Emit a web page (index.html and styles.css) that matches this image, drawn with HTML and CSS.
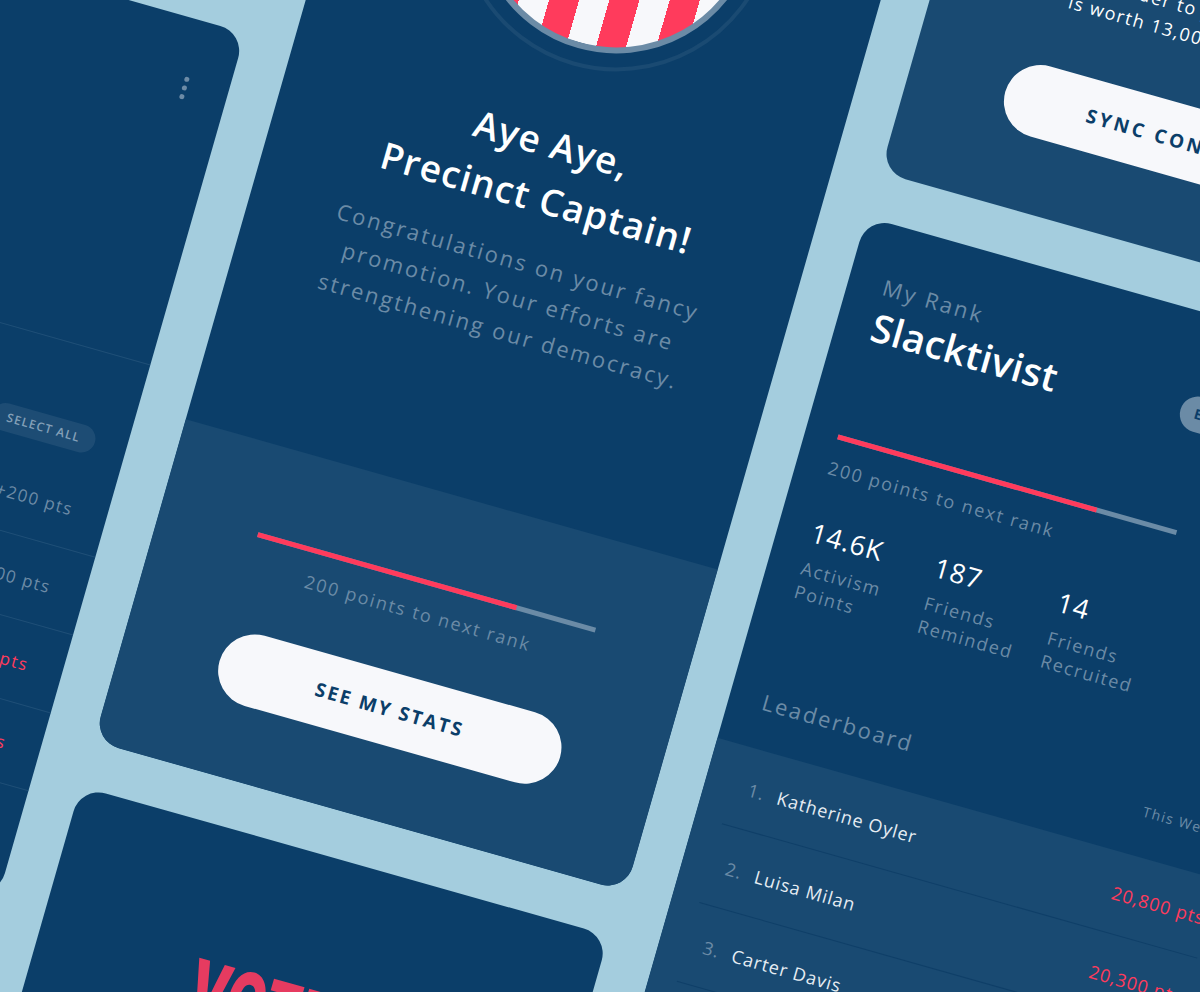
FILE: index.html
```html
<!DOCTYPE html>
<html lang="en">
<head>
    <meta charset="UTF-8">
    <meta name="viewport" content="width=device-width, initial-scale=1.0">
    <title>Precinct Captain</title>
    <link rel="stylesheet" href="styles.css">
</head>
<body>
    <div class="canvas">
        <!-- left screen, only its right side shows -->
        <section class="screen screen-left">
            <div class="menu-dots"><span></span><span></span><span></span></div>
            <div class="left-rule"></div>
            <div class="select-row"><span class="select-all">SELECT ALL</span></div>
            <div class="task-row"><span>+200 pts</span></div>
            <div class="task-row"><span>+200 pts</span></div>
            <div class="task-row is-red"><span>+200 pts</span></div>
            <div class="task-row is-red"><span>+200 pts</span></div>
        </section>

        <!-- promotion screen -->
        <section class="screen screen-promo">
            <div class="badge-ring"><div class="badge"></div></div>
            <div class="promo-top">
                <h1>Aye Aye,<br>Precinct Captain!</h1>
                <p>Congratulations on your fancy promotion. Your efforts are strengthening our democracy.</p>
            </div>
            <div class="promo-bottom">
                <div class="progress"><div class="progress-fill"></div></div>
                <div class="progress-label">200 points to next rank</div>
                <button class="pill-button">SEE MY STATS</button>
            </div>
        </section>

        <!-- vote screen under the promotion -->
        <section class="screen screen-vote">
            <div class="vote-logo">VOTE</div>
        </section>

        <!-- sync card, top right -->
        <section class="screen screen-sync">
            <p>A reminder to your contact list<br>is worth 13,000 activism pts.</p>
            <button class="pill-button">SYNC CONTACTS</button>
        </section>

        <!-- rank screen -->
        <section class="screen screen-rank">
            <div class="rank-top">
                <div class="rank-head">
                    <div class="rank-title">
                        <div class="rank-label">My Rank</div>
                        <div class="rank-name">Slacktivist</div>
                    </div>
                    <span class="edit-pill">Edit</span>
                </div>
                <div class="progress"><div class="progress-fill"></div></div>
                <div class="progress-label">200 points to next rank</div>
                <div class="stats">
                    <div class="stat"><strong>14.6K</strong><span>Activism<br>Points</span></div>
                    <div class="stat"><strong>187</strong><span>Friends<br>Reminded</span></div>
                    <div class="stat"><strong>14</strong><span>Friends<br>Recruited</span></div>
                </div>
                <div class="board-head">
                    <h2>Leaderboard</h2>
                    <span>This Week</span>
                </div>
            </div>
            <div class="board">
                <div class="board-row"><span class="place">1.</span><span class="who">Katherine Oyler</span><span class="pts">20,800 pts</span></div>
                <div class="board-row"><span class="place">2.</span><span class="who">Luisa Milan</span><span class="pts">20,300 pts</span></div>
                <div class="board-row"><span class="place">3.</span><span class="who">Carter Davis</span><span class="pts">19,900 pts</span></div>
            </div>
        </section>
    </div>
</body>
</html>
```

FILE: styles.css
```css
html, body {
    margin: 0;
    padding: 0;
    height: 100%;
    overflow: hidden;
    background-color: #a4cdde;
}

body {
    font-family: "Open Sans", "Noto Sans", sans-serif;
    color: #ffffff;
}

/* the whole board is tilted about 16deg from the page corner */
.canvas {
    position: absolute;
    left: 0;
    top: 0;
    width: 0;
    height: 0;
    transform-origin: 0 0;
    transform: matrix(0.962, 0.272, -0.275, 0.961, 0, 0);
}

.screen {
    position: absolute;
    box-sizing: border-box;
    background-color: #0b3e69;
    border-radius: 26px;
    overflow: hidden;
}

.screen-left {
    left: -300px;
    top: -35px;
    width: 545px;
    height: 900px;
    padding-left: 300px;
}

.screen-promo {
    left: 293.5px;
    top: -400px;
    width: 553.5px;
    height: 1088px;
    display: flex;
    flex-direction: column;
}

.screen-vote {
    left: 293.5px;
    top: 735px;
    width: 549.5px;
    height: 600px;
}

.screen-sync {
    left: 893.5px;
    top: -504px;
    width: 550px;
    height: 430px;
    background-color: #194a72;
    padding-top: 174px;
    text-align: center;
}

.screen-rank {
    left: 893px;
    top: -27px;
    width: 550px;
    height: 900px;
}

/* left screen */
.menu-dots {
    position: absolute;
    left: 499px;
    top: 58px;
    display: flex;
    flex-direction: column;
    gap: 4px;
}

.menu-dots span {
    width: 5px;
    height: 5px;
    border-radius: 50%;
    background-color: #6d8ba6;
}

.left-rule {
    margin-top: 345px;
    height: 1px;
    background-color: #1f4f77;
}

.select-row {
    margin-top: 75px;
    padding-left: 106px;
    height: 44px;
}

.select-all {
    display: inline-block;
    width: 107px;
    height: 28px;
    line-height: 28px;
    border-radius: 14px;
    background-color: #1d4c74;
    color: #84a0b8;
    font-size: 12px;
    font-weight: 600;
    letter-spacing: 1.1px;
    text-align: center;
    white-space: nowrap;
}

.task-row {
    height: 80px;
    border-bottom: 1px solid #1f4f77;
    display: flex;
    justify-content: flex-end;
    align-items: center;
    padding-right: 35px;
    color: #6d8ba6;
    font-size: 17px;
    letter-spacing: 1.4px;
}

.is-red {
    color: #ff3b5c;
}

/* promotion screen */
.badge-ring {
    position: absolute;
    left: 116px;
    top: 0;
    width: 318px;
    height: 318px;
    margin-top: -11px;
    box-sizing: border-box;
    border: 4px solid #1a4a72;
    border-radius: 50%;
    display: flex;
    align-items: center;
    justify-content: center;
}

.badge {
    width: 282px;
    height: 282px;
    box-sizing: border-box;
    border: 6px solid #6b8ba6;
    border-radius: 50%;
    background: repeating-linear-gradient(90deg, #ff3b5c 0 7px, #f7f8fb 7px 36px, #ff3b5c 36px 58px);
}

.promo-top {
    height: 753px;
    box-sizing: border-box;
    padding-top: 360px;
    text-align: center;
}

.promo-top h1 {
    margin: 0;
    font-size: 37px;
    line-height: 56px;
    letter-spacing: 1.1px;
    font-weight: 600;
}

.promo-top p {
    margin: 20px auto 0;
    width: 420px;
    font-size: 22px;
    line-height: 36px;
    letter-spacing: 2.3px;
    color: #6b8ba6;
}

.promo-bottom {
    flex: 1;
    background-color: #194a72;
    padding: 89px 101px 0 101.5px;
}

.promo-bottom .pill-button {
    margin-left: -2px;
}

.progress {
    height: 5px;
    background-color: #6b8ba6;
}

.progress-fill {
    width: 76.5%;
    height: 100%;
    background-color: #ff3b5c;
}

.progress-label {
    margin-top: 16px;
    font-size: 18px;
    line-height: 26px;
    letter-spacing: 1.75px;
    color: #6b8ba6;
    text-align: center;
    white-space: nowrap;
}

.pill-button {
    display: block;
    width: 354px;
    height: 73px;
    margin-top: 51px;
    padding: 0;
    border: none;
    border-radius: 37px;
    background-color: #f7f8fb;
    color: #0b3e69;
    font-family: inherit;
    font-size: 19px;
    font-weight: 700;
    letter-spacing: 2.2px;
    white-space: nowrap;
}

/* vote screen */
.vote-logo {
    margin-top: 110px;
    padding-left: 160px;
    font-family: "Inter", "Liberation Sans", sans-serif;
    font-size: 76px;
    line-height: 100px;
    font-weight: 900;
    letter-spacing: 2px;
    color: #e63b60;
    transform: scaleX(0.66);
    transform-origin: 160px 0;
}

/* sync card */
.screen-sync p {
    margin: 0;
    font-size: 18px;
    line-height: 27px;
    letter-spacing: 1.5px;
    font-weight: 500;
}

.screen-sync .pill-button {
    margin: 54px auto 0;
    padding-left: 13px;
    letter-spacing: 3.2px;
}

/* rank screen */
.rank-top {
    height: 542px;
    box-sizing: border-box;
    padding: 47px 0 0 32.5px;
}

.rank-head {
    display: flex;
    justify-content: space-between;
    width: 392px;
    height: 161px;
}

.rank-title {
    margin-left: 3px;
}

.rank-label {
    font-size: 22px;
    line-height: 30px;
    letter-spacing: 2.4px;
    color: #6b8ba6;
}

.rank-name {
    font-size: 39px;
    line-height: 52px;
    letter-spacing: 0.3px;
    font-weight: 600;
    white-space: nowrap;
}

.edit-pill {
    margin-top: 35px;
    width: 70px;
    height: 36px;
    box-sizing: border-box;
    padding-left: 15px;
    line-height: 36px;
    border-radius: 18px;
    background-color: #6b8ba6;
    color: #0b3e69;
    font-size: 14px;
    font-weight: 700;
}

.rank-top .progress {
    width: 352px;
    margin-top: 9px;
}

.rank-top .progress-label {
    margin-top: 16px;
    text-align: left;
}

.stats {
    display: flex;
    margin-top: 36px;
    margin-left: 1.5px;
}

.stat {
    width: 128px;
    display: flex;
    flex-direction: column;
}

.stat strong {
    font-size: 27px;
    line-height: 36px;
    letter-spacing: 0.8px;
    font-weight: 500;
}

.stat span {
    margin-top: 7px;
    font-size: 18px;
    line-height: 24px;
    letter-spacing: 1.6px;
    color: #6b8ba6;
}

.board-head {
    display: flex;
    justify-content: space-between;
    align-items: center;
    width: 475px;
    margin-top: 88px;
    margin-left: 1px;
}

.board-head h2 {
    margin: 0;
    font-size: 22px;
    font-weight: 500;
    letter-spacing: 2.2px;
    color: #6b8ba6;
}

.board-head span {
    margin-top: 5px;
    font-size: 14px;
    font-weight: 500;
    letter-spacing: 1.4px;
    color: #6b8ba6;
    white-space: nowrap;
}

.board {
    background-color: #194a72;
    padding: 0 28px;
    height: 400px;
}

.board-row {
    height: 81px;
    padding-left: 16px;
    border-bottom: 1px solid #0f3f68;
    display: flex;
    align-items: center;
    font-size: 18px;
    letter-spacing: 0.9px;
}

.place {
    width: 30px;
    flex: none;
    color: #6b8ba6;
}

.who {
    width: 348px;
    flex: none;
    color: #e6edf3;
}

.pts {
    color: #ff3b5c;
    letter-spacing: 0.9px;
    white-space: nowrap;
}
```
